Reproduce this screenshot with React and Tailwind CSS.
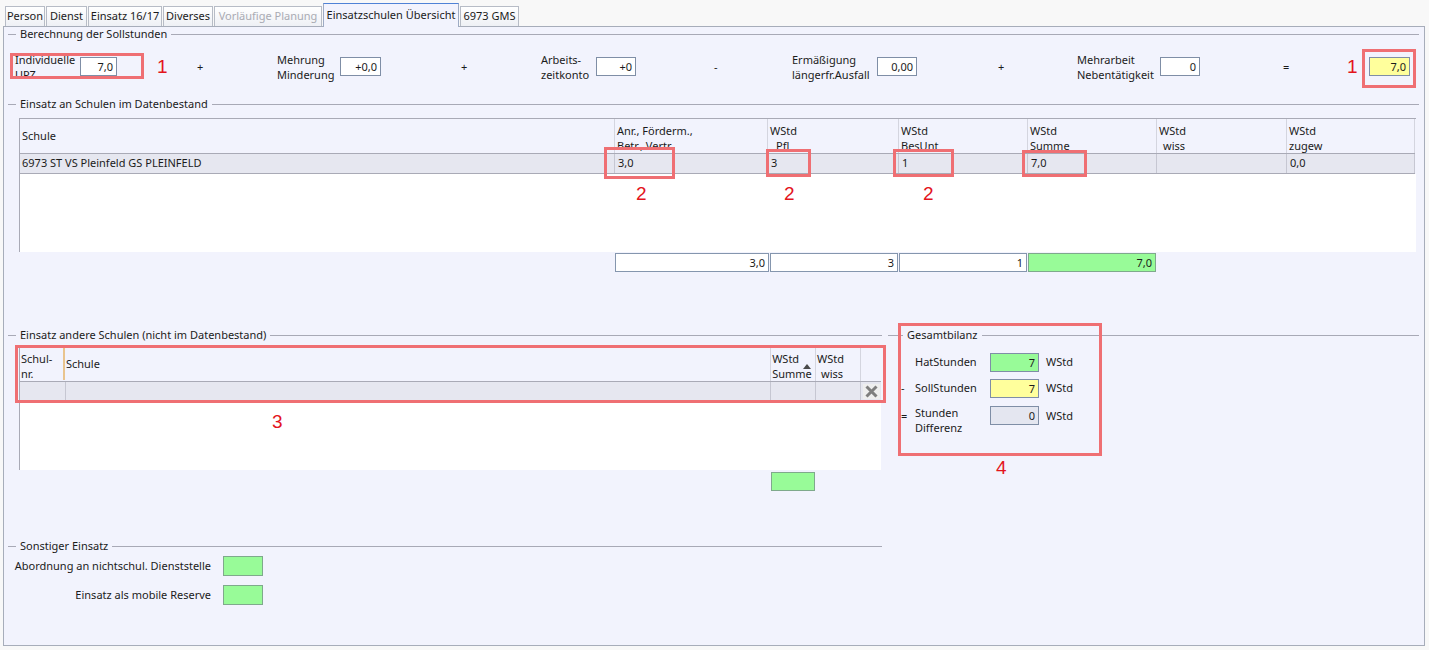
import React from 'react';

const tabs = [
  { label: 'Person', w: 'w-[40px]' },
  { label: 'Dienst', w: 'w-[41px]' },
  { label: 'Einsatz 16/17', w: 'w-[74px]' },
  { label: 'Diverses', w: 'w-[50px]' },
  { label: 'Vorläufige Planung', w: 'w-[108px]', disabled: true },
  { label: 'Einsatzschulen Übersicht', w: 'w-[136px]', active: true },
  { label: '6973 GMS', w: 'w-[59px]' },
];

function Tabs() {
  return (
    <div className="h-[26px] pl-[5px] flex items-end gap-[1px]">
      {tabs.map((t) =>
        t.active ? (
          <div
            key={t.label}
            className={`${t.w} relative z-10 -mb-px h-[24px] border border-b-0 border-[#9eabc4] border-t-[#4f82d6] bg-[#f2f3fd] flex items-center justify-center`}
          >
            {t.label}
          </div>
        ) : (
          <div
            key={t.label}
            className={`${t.w} h-[20px] border border-b-0 border-[#b7bcc6] bg-linear-to-b from-white to-[#eef0f5] flex items-center justify-center ${t.disabled ? 'text-[#a9abb3]' : ''}`}
          >
            {t.label}
          </div>
        )
      )}
    </div>
  );
}

function Legend({ title, lead = 'w-[8px]', className = '' }) {
  return (
    <div className={`flex items-center h-[14px] ${className}`}>
      <div className={`${lead} border-t border-[#a8a9b6]`} />
      <span className="px-[4px] leading-[14px]">{title}</span>
      <div className="flex-1 border-t border-[#a8a9b6]" />
    </div>
  );
}

function Label({ w, lines }) {
  return (
    <div className={`${w} leading-[15px]`}>
      {lines.map((l) => (
        <div key={l}>{l}</div>
      ))}
    </div>
  );
}

function Field({ w, value, bg = 'bg-white' }) {
  return (
    <div className={`${w} ${bg} h-[19px] border border-[#7f8ea6] text-right pr-[3px] leading-[17px]`}>
      {value}
    </div>
  );
}

function Op({ w, children }) {
  return <div className={`${w} leading-[15px]`}>{children}</div>;
}

function Mark({ w, children }) {
  return (
    <div className={`${w} font-['Liberation_Sans',sans-serif] text-[19px] leading-none text-[#e3141c]`}>
      {children}
    </div>
  );
}

function RedBox({ className }) {
  return <div className={`absolute border-[3px] border-[#ef6f73] ${className}`} />;
}

function RedNum({ className, children }) {
  return (
    <div className={`absolute font-['Liberation_Sans',sans-serif] text-[19px] leading-none text-[#e3141c] ${className}`}>
      {children}
    </div>
  );
}

function HeadCell({ w, a, b, indent = '' }) {
  return (
    <div className={`${w} border-l border-[#d4d5df] pl-[2px] pt-[4px] leading-[15px]`}>
      <div>{a}</div>
      <div className={indent}>{b}</div>
    </div>
  );
}

function RowCell({ w, children }) {
  return <div className={`${w} border-l border-[#c6c7d2] pl-[3px] flex items-center`}>{children}</div>;
}

function Total({ w, value, green }) {
  return (
    <div
      className={`${w} h-[19px] border text-right pr-[3px] leading-[17px] ${green ? 'bg-[#98fb98] border-[#7fa98c]' : 'bg-white border-[#8596ae]'}`}
    >
      {value}
    </div>
  );
}

function SchoolsTable() {
  return (
    <div className="relative ml-[11px] mt-[7px] w-[1397px]">
      <div className="flex h-[35px] border-t border-l border-[#a9aab6]">
        <div className="w-[594px] flex items-center pl-[2px]">Schule</div>
        <HeadCell w="w-[153px]" a="Anr., Förderm.," b="Betr., Vertr." />
        <HeadCell w="w-[131px]" a="WStd" b="Pfl" indent="pl-[6px]" />
        <HeadCell w="w-[129px]" a="WStd" b="BesUnt" />
        <HeadCell w="w-[129px]" a="WStd" b="Summe" />
        <HeadCell w="w-[130px]" a="WStd" b="wiss" indent="pl-[4px]" />
        <div className="w-[129px] border-x border-[#d4d5df] pl-[2px] pt-[4px] leading-[15px]">
          <div>WStd</div>
          <div>zugew</div>
        </div>
      </div>
      <div className="flex h-[21px] w-[1396px] bg-[#e6e7f0] border-y border-l border-[#a9aab6]">
        <div className="w-[594px] pl-[2px] flex items-center">6973 ST VS Pleinfeld GS PLEINFELD</div>
        <RowCell w="w-[153px]">3,0</RowCell>
        <RowCell w="w-[131px]">3</RowCell>
        <RowCell w="w-[129px]">1</RowCell>
        <RowCell w="w-[129px]">7,0</RowCell>
        <RowCell w="w-[130px]"></RowCell>
        <div className="w-[129px] border-x border-[#c6c7d2] pl-[3px] flex items-center">0,0</div>
      </div>
      <div className="h-[78px] bg-white border-l border-[#a9aab6]" />

      <RedBox className="left-[585px] top-[29px] w-[71px] h-[32px]" />
      <RedBox className="left-[747px] top-[31px] w-[45px] h-[28px]" />
      <RedBox className="left-[874px] top-[31px] w-[61px] h-[28px]" />
      <RedBox className="left-[1003px] top-[32px] w-[65px] h-[27px]" />
      <RedNum className="left-[617px] top-[66px]">2</RedNum>
      <RedNum className="left-[765px] top-[66px]">2</RedNum>
      <RedNum className="left-[904px] top-[66px]">2</RedNum>
    </div>
  );
}

function OtherTable() {
  return (
    <div className="relative ml-[11px] mt-[4px] w-[862px]">
      <div className="flex h-[35px] border-t border-l border-[#a9aab6]">
        <div className="w-[43px] pl-[1px] pt-[4px] leading-[15px]">
          <div>Schul-</div>
          <div>nr.</div>
        </div>
        <div className="w-[2px] my-[1px] bg-[#e9c48e]" />
        <div className="w-[706px] flex items-center pl-[1px]">Schule</div>
        <div className="relative w-[45px] border-l border-[#d4d5df] pl-[1px] pt-[4px] leading-[15px]">
          <div>WStd</div>
          <div>Summe</div>
          <svg className="absolute left-[32px] top-[17px]" width="8" height="5" viewBox="0 0 8 5">
            <path d="M0 5 L4 0 L8 5 Z" fill="#4a4a4a" />
          </svg>
        </div>
        <div className="w-[45px] border-l border-[#d4d5df] pl-[1px] pt-[4px] leading-[15px]">
          <div>WStd</div>
          <div className="pl-[4px]">wiss</div>
        </div>
        <div className="w-[21px] border-l border-[#d4d5df]" />
      </div>
      <div className="flex h-[20px] bg-[#e6e7f0] border-y border-l border-[#a9aab6]">
        <div className="w-[45px]" />
        <div className="w-[706px] border-l border-[#c6c7d2]" />
        <div className="w-[45px] border-l border-[#c6c7d2]" />
        <div className="w-[45px] border-l border-[#c6c7d2]" />
        <div className="w-[21px] border-l border-[#c6c7d2] flex items-center justify-center">
          <svg width="17" height="15" viewBox="0 0 17 15">
            <rect width="17" height="15" fill="#eeeeee" />
            <path d="M3.5 2.5 L13.5 12.5 M13.5 2.5 L3.5 12.5" stroke="#7e7e7e" strokeWidth="3" />
          </svg>
        </div>
      </div>
      <div className="h-[69px] bg-white border-l border-[#a9aab6]" />

      <RedBox className="-left-[4px] -top-[1px] w-[871px] h-[58px]" />
      <RedNum className="left-[253px] top-[66px]">3</RedNum>
    </div>
  );
}

function Balance() {
  return (
    <div className="relative ml-[6px] flex-1">
      <Legend title="Gesamtbilanz" lead="w-[15px]" />
      <div className="mt-[10px] flex items-center h-[20px]">
        <div className="w-[27px]" />
        <div className="w-[75px]">HatStunden</div>
        <Field w="w-[49px]" value="7" bg="bg-[#98fb98]" />
        <div className="ml-[7px]">WStd</div>
      </div>
      <div className="mt-[6px] flex items-center h-[20px]">
        <div className="w-[27px] pl-[13px]">-</div>
        <div className="w-[75px]">SollStunden</div>
        <Field w="w-[49px]" value="7" bg="bg-[#ffff9c]" />
        <div className="ml-[7px]">WStd</div>
      </div>
      <div className="mt-[8px] flex items-start">
        <div className="w-[27px] pl-[13px] pt-[2px]">=</div>
        <div className="w-[75px] leading-[15px] -mt-[1px]">
          <div>Stunden</div>
          <div>Differenz</div>
        </div>
        <Field w="w-[49px]" value="0" bg="bg-[#e4e6f0]" />
        <div className="ml-[7px] leading-[19px]">WStd</div>
      </div>

      <RedBox className="left-[10px] -top-[5px] w-[204px] h-[133px]" />
      <RedNum className="left-[108px] top-[130px]">4</RedNum>
    </div>
  );
}

export default function App() {
  return (
    <div className="w-[1429px] h-[650px] overflow-hidden bg-[#f8f8f8] font-['Noto_Sans',sans-serif] text-[11px] text-[#1b1b1b]">
      <Tabs />
      <div className="ml-[3px] w-[1422px] h-[620px] border border-[#a7adba] bg-[#f2f3fd] pl-[4px] pr-[5px]">
        <Legend title="Berechnung der Sollstunden" />

        <div className="relative mt-[8px] h-[35px] flex items-center">
          <div className="w-[149px] pl-[7px] flex items-center">
            <Label w="w-[65px]" lines={['Individuelle', 'UPZ']} />
            <Field w="w-[37px]" value="7,0" />
          </div>
          <Mark w="w-[40px]">1</Mark>
          <Op w="w-[80px]">+</Op>
          <div className="w-[184px] flex items-center">
            <Label w="w-[63px]" lines={['Mehrung', 'Minderung']} />
            <Field w="w-[41px]" value="+0,0" />
          </div>
          <Op w="w-[80px]">+</Op>
          <div className="w-[173px] flex items-center">
            <Label w="w-[55px]" lines={['Arbeits-', 'zeitkonto']} />
            <Field w="w-[40px]" value="+0" />
          </div>
          <Op w="w-[78px]">-</Op>
          <div className="w-[206px] flex items-center">
            <Label w="w-[85px]" lines={['Ermäßigung', 'längerfr.Ausfall']} />
            <Field w="w-[40px]" value="0,00" />
          </div>
          <Op w="w-[79px]">+</Op>
          <div className="w-[206px] flex items-center">
            <Label w="w-[83px]" lines={['Mehrarbeit', 'Nebentätigkeit']} />
            <Field w="w-[40px]" value="0" />
          </div>
          <Op w="w-[64px]">=</Op>
          <Mark w="w-[22px]">1</Mark>
          <Field w="w-[41px]" value="7,0" bg="bg-[#ffff9c]" />

          <RedBox className="left-[2px] top-[4px] w-[134px] h-[26px]" />
          <RedBox className="left-[1354px] top-0 w-[54px] h-[39px]" />
        </div>

        <Legend title="Einsatz an Schulen im Datenbestand" className="mt-[13px]" />
        <SchoolsTable />

        <div className="ml-[607px] mt-[1px] flex gap-[1px]">
          <Total w="w-[154px]" value="3,0" />
          <Total w="w-[128px]" value="3" />
          <Total w="w-[128px]" value="1" />
          <Total w="w-[128px]" value="7,0" green />
        </div>

        <div className="mt-[56px] flex">
          <div className="w-[874px]">
            <Legend title="Einsatz andere Schulen (nicht im Datenbestand)" />
            <OtherTable />
            <div className="ml-[763px] mt-[2px] w-[44px] h-[19px] bg-[#98fb98] border border-[#7fa98c]" />
          </div>
          <Balance />
        </div>

        <Legend title="Sonstiger Einsatz" className="mt-[48px] w-[874px]" />
        <div className="mt-[3px] flex items-center h-[20px]">
          <div className="w-[203px] text-right">Abordnung an nichtschul. Dienststelle</div>
          <div className="ml-[12px] w-[40px] h-[20px] bg-[#98fb98] border border-[#7fa98c]" />
        </div>
        <div className="mt-[9px] flex items-center h-[20px]">
          <div className="w-[203px] text-right">Einsatz als mobile Reserve</div>
          <div className="ml-[12px] w-[40px] h-[20px] bg-[#98fb98] border border-[#7fa98c]" />
        </div>
      </div>
    </div>
  );
}
